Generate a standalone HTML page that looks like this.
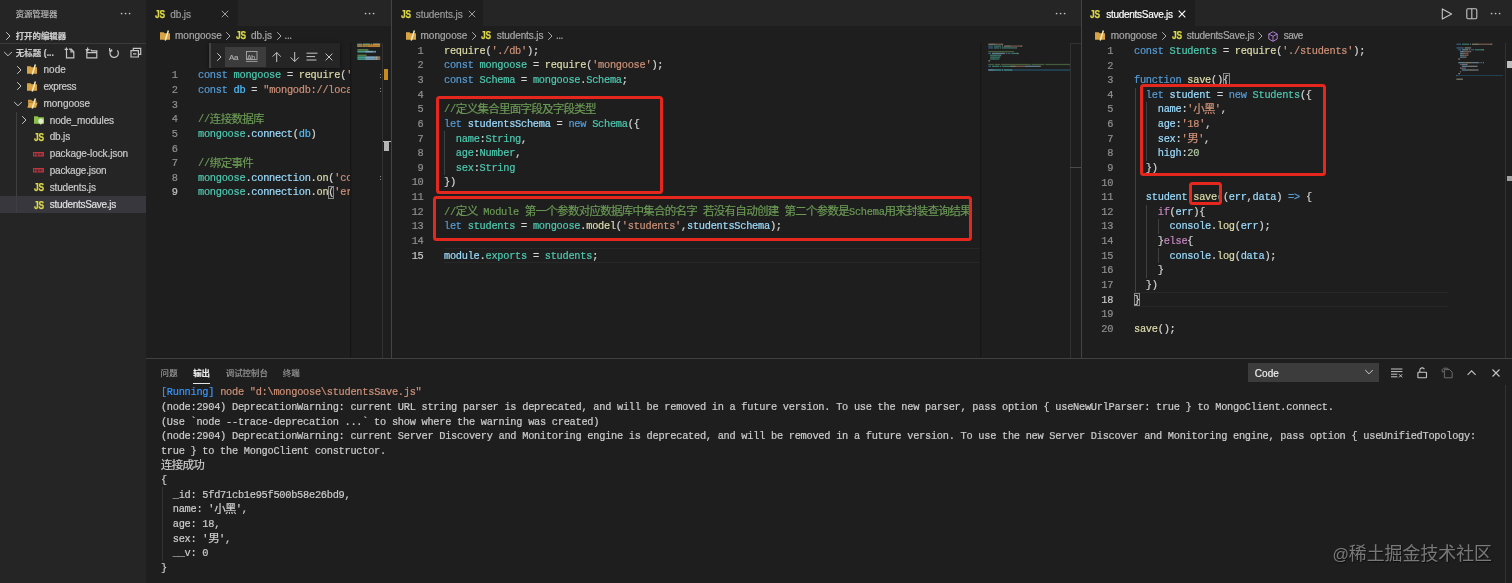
<!DOCTYPE html>
<html lang="zh-CN">
<head>
<meta charset="utf-8">
<title>mongoose - Visual Studio Code</title>
<style>
*{box-sizing:border-box;margin:0;padding:0}
html,body{width:1512px;height:583px;overflow:hidden;background:#1e1e1e}
body{position:relative;font-family:"Liberation Sans","Noto Sans CJK SC",sans-serif;font-size:10px;color:#ccc}
.abs,.ln,.cl,.ol,.t{position:absolute;white-space:pre}
#app{position:absolute;left:0;top:0;width:1512px;height:583px;will-change:transform}
#side{position:absolute;left:0;top:0;width:146px;height:583px;background:#252526}
.t{line-height:17px;height:17px;-webkit-text-stroke:0.18px currentColor}
.cjb{font-family:"Liberation Sans","Noto Sans CJK SC",sans-serif;font-weight:700;font-size:8.43px}
.cjn{font-family:"Liberation Sans","Noto Sans CJK SC",sans-serif;font-weight:400;font-size:8.43px}
.js{color:#dcd84a;-webkit-text-stroke:0.25px #dcd84a;font-weight:700;letter-spacing:-0.3px;transform:scaleX(0.83);transform-origin:0 50%}
.ln,.cl,.ol{font-family:"Liberation Mono","Noto Sans CJK SC",monospace;font-size:10.3px;letter-spacing:-0.256px;line-height:14.63px;height:14.63px}
.ln{color:#8f8f8f;text-align:right}
.cl,.ol,.ln{-webkit-text-stroke:0.2px currentColor}
.cl span{-webkit-text-stroke:0.2px currentColor}
.ln.act{color:#c6c6c6}
.cl{color:#d4d4d4}
.cj{font-family:"Liberation Mono","Noto Sans CJK SC",monospace;font-size:11.5px;letter-spacing:-0.73px;line-height:0;position:relative;top:0.5px}
.k{color:#569cd6}.y{color:#4ec9b0}.v{color:#9cdcfe}.f{color:#dcdcaa}.s{color:#ce9178}.m{color:#6a9955}.c{color:#4fc1ff}.n{color:#b5cea8}.p{color:#c586c0}
.ol{left:160.9px;color:#cccccc}
.ob{color:#3794ff}.oo{color:#ce9178}
.redbox{position:absolute;border:3.1px solid #e6271d;border-radius:3.5px}
svg{position:absolute;overflow:visible}
.cjb,.cjn{margin-top:0.7px}

#f0{letter-spacing:-0.125px}
#f1{letter-spacing:-0.008px}
#f2{letter-spacing:0.108px}
#f3{letter-spacing:0.088px}
#f4{letter-spacing:-0.331px}
#f5{letter-spacing:0.012px}
#f6{letter-spacing:-0.109px}
#f7{letter-spacing:-0.165px}
#f8{letter-spacing:-0.097px}
#f9{letter-spacing:-0.178px}
#f10{letter-spacing:-0.156px}
#f11{letter-spacing:-0.287px}
#f12{letter-spacing:-0.085px}
#f13{letter-spacing:-0.000px}
#f14{letter-spacing:-0.025px}
#f15{letter-spacing:-0.348px}
#f16{letter-spacing:-0.092px}
#f17{letter-spacing:0.012px}
#f18{letter-spacing:-0.119px}
#f19{letter-spacing:-0.415px}
#f20{letter-spacing:-0.267px}
#f21{letter-spacing:-0.025px}
#f22{letter-spacing:-0.214px}
#f23{letter-spacing:-0.556px}
#f24{letter-spacing:0.270px}
#f25{letter-spacing:-0.030px}
#f26{letter-spacing:-0.025px}
#f27{letter-spacing:0.220px}
#f28{letter-spacing:0.048px}
</style>
</head>
<body>
<div id="app">
<div id="side"></div>
<div id="f0" class="t cjn" style="left:15.7px;top:4.9px;color:#bbbbbb;">资源管理器</div>
<svg style="left:120.0px;top:11.0px" width="12" height="5" viewBox="0 0 12 5"><circle cx="1.6" cy="2.5" r="0.85" fill="#c5c5c5"/><circle cx="5.6" cy="2.5" r="0.85" fill="#c5c5c5"/><circle cx="9.6" cy="2.5" r="0.85" fill="#c5c5c5"/></svg>
<svg style="left:4.3px;top:29.8px" width="8" height="12" viewBox="0 0 8 12"><path d="M2.2 2.2 L6 6 L2.2 9.8" fill="none" stroke="#c5c5c5" stroke-width="1"/></svg>
<div id="f1" class="t cjb" style="left:15.7px;top:27.1px;color:#cccccc;">打开的编辑器</div>
<div class="abs" style="left:0.0px;top:43.0px;width:146.0px;height:1.0px;background:#3a3a3b;"></div>
<svg style="left:1.8px;top:49.6px" width="12" height="8" viewBox="0 0 12 8"><path d="M2.2 2 L6 5.8 L9.8 2" fill="none" stroke="#c5c5c5" stroke-width="1"/></svg>
<div id="f2" class="t cjb" style="left:15.7px;top:44.7px;color:#cccccc;">无标题 (...</div>
<svg style="left:64.0px;top:46.5px" width="12" height="12" viewBox="0 0 12 12"><path d="M2.5 3.5 v7.3 h7.3 v-6 l-2.6 -2.6 h-2.2 M7 2.3 v2.7 h2.7 M0.6 2.3 h3.6 M2.4 0.5 v3.6" fill="none" stroke="#c5c5c5" stroke-width="1.2"/></svg>
<svg style="left:85.0px;top:46.5px" width="13" height="12" viewBox="0 0 13 12"><path d="M3.2 3 h-1.4 v7.8 h10 v-7 h-5 l-1 -1.2 M1.8 5.6 h10 M0.6 2.6 h4 M2.6 0.6 v4" fill="none" stroke="#c5c5c5" stroke-width="1.2"/></svg>
<svg style="left:107.5px;top:46.5px" width="12" height="12" viewBox="0 0 12 12"><path d="M9.3 3.4 A4.2 4.2 0 1 1 4.1 2.6" fill="none" stroke="#c5c5c5" stroke-width="1.2"/><path d="M1.6 1.1 v2.7 h2.7" fill="none" stroke="#c5c5c5" stroke-width="1.2"/></svg>
<svg style="left:129.5px;top:47.0px" width="12" height="12" viewBox="0 0 12 12"><path d="M3.3 3.3 v-2 h7.4 v6 h-2 M1 3.6 h7.4 v6.4 h-7.4 z M3 6.8 h3.4" fill="none" stroke="#c5c5c5" stroke-width="1.2"/></svg>
<div class="abs" style="left:0.0px;top:195.9px;width:146.0px;height:16.9px;background:#37373d;"></div>
<div class="abs" style="left:16.4px;top:111.5px;width:0.8px;height:101.3px;background:#3f3f41;"></div>
<svg style="left:14.6px;top:63.5px" width="8" height="12" viewBox="0 0 8 12"><path d="M2.2 2.2 L6 6 L2.2 9.8" fill="none" stroke="#c5c5c5" stroke-width="1"/></svg>
<svg style="left:27.4px;top:64.9px" width="11" height="10" viewBox="0 0 11 10"><path d="M0 1.2 h3.6 l1 1 h5.4 v6.6 h-10 z" fill="#d9a243"/><path d="M5.2 9.6 L8.4 -0.4" stroke="#f7ebbd" stroke-width="1.5" fill="none"/></svg>
<div id="f3" class="t " style="left:43.4px;top:61.0px;color:#ccc;">node</div>
<svg style="left:14.6px;top:80.3px" width="8" height="12" viewBox="0 0 8 12"><path d="M2.2 2.2 L6 6 L2.2 9.8" fill="none" stroke="#c5c5c5" stroke-width="1"/></svg>
<svg style="left:27.4px;top:81.8px" width="11" height="10" viewBox="0 0 11 10"><path d="M0 1.2 h3.6 l1 1 h5.4 v6.6 h-10 z" fill="#d9a243"/><path d="M5.2 9.6 L8.4 -0.4" stroke="#f7ebbd" stroke-width="1.5" fill="none"/></svg>
<div id="f4" class="t " style="left:43.4px;top:77.8px;color:#ccc;">express</div>
<svg style="left:11.6px;top:99.6px" width="12" height="8" viewBox="0 0 12 8"><path d="M2.2 2 L6 5.8 L9.8 2" fill="none" stroke="#c5c5c5" stroke-width="1"/></svg>
<svg style="left:27.4px;top:98.6px" width="11" height="10" viewBox="0 0 11 10"><path d="M1 0.8 h3.2 l1 1 h4.3 v2 h-7.5 l-1 4 z" fill="#c8933c"/><path d="M2 3.8 h8.6 l-1.6 5 h-8.6 z" fill="#e0aa4a"/><path d="M5.2 9.6 L8.4 -0.4" stroke="#f7ebbd" stroke-width="1.5" fill="none"/></svg>
<div id="f5" class="t " style="left:43.4px;top:94.7px;color:#ccc;">mongoose</div>
<svg style="left:20.3px;top:114.1px" width="8" height="12" viewBox="0 0 8 12"><path d="M2.2 2.2 L6 6 L2.2 9.8" fill="none" stroke="#c5c5c5" stroke-width="1"/></svg>
<svg style="left:33.6px;top:115.1px" width="11" height="10" viewBox="0 0 11 10"><path d="M0 1.2 h3.6 l1 1 h5.4 v6.6 h-10 z" fill="#8bc34a"/><path d="M6.8 3 l2.8 1.6 v3.2 l-2.8 1.6 l-2.8 -1.6 v-3.2 z" fill="#dcedc8" stroke="#7cb342" stroke-width="0.5"/></svg>
<div id="f6" class="t " style="left:49.7px;top:111.6px;color:#ccc;">node_modules</div>
<div class="t js" style="left:33.8px;top:128.7px;font-size:10.1px">JS</div>
<div id="f7" class="t " style="left:49.7px;top:128.4px;color:#ccc;">db.js</div>
<svg style="left:33.0px;top:151.6px" width="11" height="5" viewBox="0 0 11 5"><rect x="0" y="0" width="11" height="4.4" fill="#c23640" rx="0.5"/><path d="M1.5 1.2v2.2 M3 1.2v2.2M4.6 1.2v2.9 M6 1.2v2.2 M7.6 1.2v2.2M9 1.2v2.2" stroke="#252526" stroke-width="0.85"/></svg>
<div id="f8" class="t " style="left:49.7px;top:145.2px;color:#ccc;">package-lock.json</div>
<svg style="left:33.0px;top:168.4px" width="11" height="5" viewBox="0 0 11 5"><rect x="0" y="0" width="11" height="4.4" fill="#c23640" rx="0.5"/><path d="M1.5 1.2v2.2 M3 1.2v2.2M4.6 1.2v2.9 M6 1.2v2.2 M7.6 1.2v2.2M9 1.2v2.2" stroke="#252526" stroke-width="0.85"/></svg>
<div id="f9" class="t " style="left:49.7px;top:162.1px;color:#ccc;">package.json</div>
<div class="t js" style="left:33.8px;top:179.3px;font-size:10.1px">JS</div>
<div id="f10" class="t " style="left:49.7px;top:179.0px;color:#ccc;">students.js</div>
<div class="t js" style="left:33.8px;top:196.7px;font-size:10.1px">JS</div>
<div id="f11" class="t " style="left:49.7px;top:195.8px;color:#e0e0e0;">studentsSave.js</div>
<div class="abs" style="left:146.0px;top:0.0px;width:245.0px;height:26.1px;background:#252526;"></div>
<div class="abs" style="left:146.0px;top:0.0px;width:92.0px;height:26.1px;background:#1e1e1e;"></div>
<div class="t js" style="left:155.0px;top:5.7px;font-size:10.1px">JS</div>
<div id="f12" class="t " style="left:170.2px;top:5.9px;color:#9d9d9d;">db.js</div>
<svg style="left:219.7px;top:8.8px" width="10" height="10" viewBox="0 0 10 10"><path d="M1.8 1.8 L8.2 8.2 M8.2 1.8 L1.8 8.2" fill="none" stroke="#9d9d9d" stroke-width="1"/></svg>
<svg style="left:364.0px;top:11.0px" width="12" height="5" viewBox="0 0 12 5"><circle cx="1.6" cy="2.5" r="0.85" fill="#c5c5c5"/><circle cx="5.6" cy="2.5" r="0.85" fill="#c5c5c5"/><circle cx="9.6" cy="2.5" r="0.85" fill="#c5c5c5"/></svg>
<svg style="left:160.0px;top:31.2px" width="11" height="10" viewBox="0 0 11 10"><path d="M0 1.2 h3.6 l1 1 h5.4 v6.6 h-10 z" fill="#d9a243"/><path d="M5.2 9.6 L8.4 -0.4" stroke="#f7ebbd" stroke-width="1.5" fill="none"/></svg>
<div id="f13" class="t " style="left:175.0px;top:27.2px;color:#a9a9a9;">mongoose</div>
<svg style="left:224.0px;top:30.0px" width="8" height="12" viewBox="0 0 8 12"><path d="M2.2 2.2 L6 6 L2.2 9.8" fill="none" stroke="#a9a9a9" stroke-width="1"/></svg>
<div class="t js" style="left:236.0px;top:27.1px;font-size:10.1px">JS</div>
<div id="f14" class="t " style="left:251.0px;top:27.2px;color:#a9a9a9;">db.js</div>
<svg style="left:274.7px;top:30.0px" width="8" height="12" viewBox="0 0 8 12"><path d="M2.2 2.2 L6 6 L2.2 9.8" fill="none" stroke="#a9a9a9" stroke-width="1"/></svg>
<div id="f15" class="t " style="left:284.5px;top:27.2px;color:#a9a9a9;">...</div>
<div class="ln" style="top:68.40px;left:137.6px;width:40px">1</div>
<div class="cl" style="top:68.40px;left:198.0px;width:152px;overflow:hidden;"><span class="k">const</span> <span class="y">mongoose</span> = <span class="f">require</span>(<span class="s">'mongoose');</span></div>
<div class="ln" style="top:83.03px;left:137.6px;width:40px">2</div>
<div class="cl" style="top:83.03px;left:198.0px;width:152px;overflow:hidden;"><span class="k">const</span> <span class="c">db</span> = <span class="s">"mongodb://localhost/students";</span></div>
<div class="ln" style="top:97.66px;left:137.6px;width:40px">3</div>
<div class="ln" style="top:112.29px;left:137.6px;width:40px">4</div>
<div class="cl" style="top:112.29px;left:198.0px;width:152px;overflow:hidden;"><span class="m">//<span class="cj">连接数据库</span></span></div>
<div class="ln" style="top:126.92px;left:137.6px;width:40px">5</div>
<div class="cl" style="top:126.92px;left:198.0px;width:152px;overflow:hidden;"><span class="y">mongoose</span>.<span class="v">connect</span>(<span class="c">db</span>)</div>
<div class="ln" style="top:141.55px;left:137.6px;width:40px">6</div>
<div class="ln" style="top:156.18px;left:137.6px;width:40px">7</div>
<div class="cl" style="top:156.18px;left:198.0px;width:152px;overflow:hidden;"><span class="m">//<span class="cj">绑定事件</span></span></div>
<div class="ln" style="top:170.81px;left:137.6px;width:40px">8</div>
<div class="cl" style="top:170.81px;left:198.0px;width:152px;overflow:hidden;"><span class="y">mongoose</span>.<span class="v">connection</span>.<span class="f">on</span>(<span class="s">'connected',</span></div>
<div class="ln act" style="top:185.44px;left:137.6px;width:40px">9</div>
<div class="cl" style="top:185.44px;left:198.0px;width:152px;overflow:hidden;"><span class="y">mongoose</span>.<span class="v">connection</span>.<span class="f">on</span>(<span class="s">'error',</span></div>
<div class="abs" style="left:327.8px;top:185.9px;width:6.4px;height:13.6px;background:transparent;border:1px solid #888"></div>
<div class="abs" style="left:380.3px;top:73.5px;width:1.0px;height:1.2px;background:#8a8a8a;"></div>
<div class="abs" style="left:380.3px;top:76.5px;width:1.0px;height:1.2px;background:#8a8a8a;"></div>
<div class="abs" style="left:380.3px;top:88.0px;width:1.0px;height:1.2px;background:#8a8a8a;"></div>
<div class="abs" style="left:380.3px;top:91.0px;width:1.0px;height:1.2px;background:#8a8a8a;"></div>
<div class="abs" style="left:380.3px;top:175.5px;width:1.0px;height:1.2px;background:#8a8a8a;"></div>
<div class="abs" style="left:380.3px;top:178.5px;width:1.0px;height:1.2px;background:#8a8a8a;"></div>
<div class="abs" style="left:209.0px;top:43.0px;width:131.0px;height:25.0px;background:#252526;box-shadow:0 1px 4px rgba(0,0,0,0.5)"></div>
<div class="abs" style="left:209.0px;top:43.0px;width:2.3px;height:25.0px;background:#454545;"></div>
<div class="abs" style="left:224.5px;top:47.2px;width:41.5px;height:20.0px;background:#3c3c3c;"></div>
<svg style="left:214.6px;top:50.6px" width="8" height="12" viewBox="0 0 8 12"><path d="M2.2 2.2 L6 6 L2.2 9.8" fill="none" stroke="#c5c5c5" stroke-width="1"/></svg>
<div class="t" style="left:229px;top:48.5px;font-size:8px;color:#b0b0b0;letter-spacing:-0.4px">Aa</div>
<svg style="left:245.5px;top:51.0px" width="12" height="11" viewBox="0 0 12 11"><rect x="0.5" y="0.5" width="10.5" height="8" fill="none" stroke="#a8a8a8" stroke-width="0.9"/><path d="M0 10.4 h11.5" stroke="#a8a8a8" stroke-width="0.9"/></svg>
<div class="t" style="left:247px;top:48.8px;font-size:7px;color:#a8a8a8;letter-spacing:-0.3px">Ab</div>
<svg style="left:271.0px;top:51.0px" width="12" height="12" viewBox="0 0 12 12"><path d="M5.7 11 V1.6 M1.6 5.6 L5.7 1.5 L9.8 5.6" fill="none" stroke="#c5c5c5" stroke-width="1"/></svg>
<svg style="left:289.0px;top:51.0px" width="12" height="12" viewBox="0 0 12 12"><path d="M5.7 1 V10.4 M1.6 6.4 L5.7 10.5 L9.8 6.4" fill="none" stroke="#c5c5c5" stroke-width="1"/></svg>
<svg style="left:305.5px;top:51.0px" width="12" height="12" viewBox="0 0 12 12"><path d="M0.5 2.2 h11 M0.5 5.6 h8.6 M0.5 9 h10" fill="none" stroke="#c5c5c5" stroke-width="1"/></svg>
<svg style="left:323.9px;top:51.7px" width="10" height="10" viewBox="0 0 10 10"><path d="M1.6 1.6 L8.4 8.4 M8.4 1.6 L1.6 8.4" fill="none" stroke="#c5c5c5" stroke-width="1"/></svg>
<div class="abs" style="left:350.0px;top:43.0px;width:2.0px;height:315.0px;background:linear-gradient(90deg,rgba(0,0,0,0.35),rgba(0,0,0,0));"></div>
<svg style="left:0;top:0" width="1512" height="583"><rect x="357.40" y="43.50" width="4.60" height="1.70" fill="#569cd6" fill-opacity="0.75"/><rect x="362.92" y="43.50" width="7.36" height="1.70" fill="#4ec9b0" fill-opacity="0.75"/><rect x="371.20" y="43.50" width="0.92" height="1.70" fill="#d4d4d4" fill-opacity="0.75"/><rect x="373.04" y="43.50" width="6.44" height="1.70" fill="#dcdcaa" fill-opacity="0.75"/><rect x="379.48" y="43.50" width="0.72" height="1.70" fill="#d4d4d4" fill-opacity="0.75"/><rect x="357.40" y="45.34" width="4.60" height="1.70" fill="#569cd6" fill-opacity="0.75"/><rect x="362.92" y="45.34" width="1.84" height="1.70" fill="#4fc1ff" fill-opacity="0.75"/><rect x="365.68" y="45.34" width="0.92" height="1.70" fill="#d4d4d4" fill-opacity="0.75"/><rect x="367.52" y="45.34" width="12.68" height="1.70" fill="#ce9178" fill-opacity="0.75"/><rect x="357.40" y="49.02" width="11.04" height="1.70" fill="#6a9955" fill-opacity="0.75"/><rect x="357.40" y="50.86" width="7.36" height="1.70" fill="#4ec9b0" fill-opacity="0.75"/><rect x="364.76" y="50.86" width="0.92" height="1.70" fill="#d4d4d4" fill-opacity="0.75"/><rect x="365.68" y="50.86" width="6.44" height="1.70" fill="#9cdcfe" fill-opacity="0.75"/><rect x="372.12" y="50.86" width="0.92" height="1.70" fill="#d4d4d4" fill-opacity="0.75"/><rect x="373.04" y="50.86" width="1.84" height="1.70" fill="#4fc1ff" fill-opacity="0.75"/><rect x="374.88" y="50.86" width="0.92" height="1.70" fill="#d4d4d4" fill-opacity="0.75"/><rect x="357.40" y="54.54" width="9.20" height="1.70" fill="#6a9955" fill-opacity="0.75"/><rect x="357.40" y="56.38" width="7.36" height="1.70" fill="#4ec9b0" fill-opacity="0.75"/><rect x="364.76" y="56.38" width="0.92" height="1.70" fill="#d4d4d4" fill-opacity="0.75"/><rect x="365.68" y="56.38" width="9.20" height="1.70" fill="#9cdcfe" fill-opacity="0.75"/><rect x="374.88" y="56.38" width="0.92" height="1.70" fill="#d4d4d4" fill-opacity="0.75"/><rect x="375.80" y="56.38" width="1.84" height="1.70" fill="#dcdcaa" fill-opacity="0.75"/><rect x="377.64" y="56.38" width="0.92" height="1.70" fill="#d4d4d4" fill-opacity="0.75"/><rect x="378.56" y="56.38" width="1.64" height="1.70" fill="#ce9178" fill-opacity="0.75"/><rect x="357.40" y="58.22" width="7.36" height="1.70" fill="#4ec9b0" fill-opacity="0.75"/><rect x="364.76" y="58.22" width="0.92" height="1.70" fill="#d4d4d4" fill-opacity="0.75"/><rect x="365.68" y="58.22" width="9.20" height="1.70" fill="#9cdcfe" fill-opacity="0.75"/><rect x="374.88" y="58.22" width="0.92" height="1.70" fill="#d4d4d4" fill-opacity="0.75"/><rect x="375.80" y="58.22" width="1.84" height="1.70" fill="#dcdcaa" fill-opacity="0.75"/><rect x="377.64" y="58.22" width="0.92" height="1.70" fill="#d4d4d4" fill-opacity="0.75"/><rect x="378.56" y="58.22" width="1.64" height="1.70" fill="#ce9178" fill-opacity="0.75"/></svg>
<div class="abs" style="left:357.4px;top:43.8px;width:22.6px;height:3.0px;background:rgba(209,134,22,0.55);"></div>
<div class="abs" style="left:382.0px;top:43.0px;width:0.8px;height:315.0px;background:#323232;"></div>
<div class="abs" style="left:383.8px;top:69.4px;width:4.2px;height:10.8px;background:#c58a22;"></div>
<div class="abs" style="left:383.0px;top:140.6px;width:7.5px;height:1.6px;background:#bdbdbd;"></div>
<div class="abs" style="left:384.0px;top:142.0px;width:4.6px;height:9.4px;background:#b4b4b4;"></div>
<div class="abs" style="left:391.0px;top:0.0px;width:1.0px;height:358.0px;background:#444444;"></div>
<div class="abs" style="left:392.0px;top:0.0px;width:690.0px;height:26.1px;background:#252526;"></div>
<div class="abs" style="left:392.0px;top:0.0px;width:90.5px;height:26.1px;background:#1e1e1e;"></div>
<div class="t js" style="left:401.0px;top:5.7px;font-size:10.1px">JS</div>
<div id="f16" class="t " style="left:415.8px;top:5.9px;color:#9d9d9d;">students.js</div>
<svg style="left:466.8px;top:8.8px" width="10" height="10" viewBox="0 0 10 10"><path d="M1.8 1.8 L8.2 8.2 M8.2 1.8 L1.8 8.2" fill="none" stroke="#9d9d9d" stroke-width="1"/></svg>
<svg style="left:1055.0px;top:11.0px" width="12" height="5" viewBox="0 0 12 5"><circle cx="1.6" cy="2.5" r="0.85" fill="#c5c5c5"/><circle cx="5.6" cy="2.5" r="0.85" fill="#c5c5c5"/><circle cx="9.6" cy="2.5" r="0.85" fill="#c5c5c5"/></svg>
<svg style="left:405.7px;top:31.2px" width="11" height="10" viewBox="0 0 11 10"><path d="M0 1.2 h3.6 l1 1 h5.4 v6.6 h-10 z" fill="#d9a243"/><path d="M5.2 9.6 L8.4 -0.4" stroke="#f7ebbd" stroke-width="1.5" fill="none"/></svg>
<div id="f17" class="t " style="left:420.5px;top:27.2px;color:#a9a9a9;">mongoose</div>
<svg style="left:470.2px;top:30.0px" width="8" height="12" viewBox="0 0 8 12"><path d="M2.2 2.2 L6 6 L2.2 9.8" fill="none" stroke="#a9a9a9" stroke-width="1"/></svg>
<div class="t js" style="left:481.0px;top:27.1px;font-size:10.1px">JS</div>
<div id="f18" class="t " style="left:496.8px;top:27.2px;color:#a9a9a9;">students.js</div>
<svg style="left:546.2px;top:30.0px" width="8" height="12" viewBox="0 0 8 12"><path d="M2.2 2.2 L6 6 L2.2 9.8" fill="none" stroke="#a9a9a9" stroke-width="1"/></svg>
<div id="f19" class="t " style="left:555.9px;top:27.2px;color:#a9a9a9;">...</div>
<div class="abs" style="left:444.0px;top:248.4px;width:536.0px;height:14.6px;background:transparent;border-top:1px solid #272727;border-bottom:1px solid #272727"></div>
<div class="abs" style="left:444.3px;top:131.4px;width:0.8px;height:43.9px;background:#404040;"></div>
<div class="ln" style="top:43.80px;left:383.5px;width:40px">1</div>
<div class="cl" style="top:43.80px;left:444.0px;"><span class="f">require</span>(<span class="s">'./db'</span>);</div>
<div class="ln" style="top:58.43px;left:383.5px;width:40px">2</div>
<div class="cl" style="top:58.43px;left:444.0px;"><span class="k">const</span> <span class="y">mongoose</span> = <span class="f">require</span>(<span class="s">'mongoose'</span>);</div>
<div class="ln" style="top:73.06px;left:383.5px;width:40px">3</div>
<div class="cl" style="top:73.06px;left:444.0px;"><span class="k">const</span> <span class="y">Schema</span> = <span class="y">mongoose</span>.<span class="y">Schema</span>;</div>
<div class="ln" style="top:87.69px;left:383.5px;width:40px">4</div>
<div class="ln" style="top:102.32px;left:383.5px;width:40px">5</div>
<div class="cl" style="top:102.32px;left:444.0px;"><span class="m">//<span class="cj">定义集合里面字段及字段类型</span></span></div>
<div class="ln" style="top:116.95px;left:383.5px;width:40px">6</div>
<div class="cl" style="top:116.95px;left:444.0px;"><span class="k">let</span> <span class="v">studentsSchema</span> = <span class="k">new</span> <span class="y">Schema</span>({</div>
<div class="ln" style="top:131.58px;left:383.5px;width:40px">7</div>
<div class="cl" style="top:131.58px;left:444.0px;">  <span class="y">name</span>:<span class="y">String</span>,</div>
<div class="ln" style="top:146.21px;left:383.5px;width:40px">8</div>
<div class="cl" style="top:146.21px;left:444.0px;">  <span class="y">age</span>:<span class="y">Number</span>,</div>
<div class="ln" style="top:160.84px;left:383.5px;width:40px">9</div>
<div class="cl" style="top:160.84px;left:444.0px;">  <span class="y">sex</span>:<span class="y">String</span></div>
<div class="ln" style="top:175.47px;left:383.5px;width:40px">10</div>
<div class="cl" style="top:175.47px;left:444.0px;">})</div>
<div class="ln" style="top:190.10px;left:383.5px;width:40px">11</div>
<div class="ln" style="top:204.73px;left:383.5px;width:40px">12</div>
<div class="cl" style="top:204.73px;left:444.0px;"><span class="m">//<span class="cj">定义</span> Module <span class="cj">第一个参数对应数据库中集合的名字</span> <span class="cj">若没有自动创建</span> <span class="cj">第二个参数是</span>Schema<span class="cj">用来封装查询结果</span></span></div>
<div class="ln" style="top:219.36px;left:383.5px;width:40px">13</div>
<div class="cl" style="top:219.36px;left:444.0px;"><span class="k">let</span> <span class="y">students</span> = <span class="y">mongoose</span>.<span class="f">model</span>(<span class="s">'students'</span>,<span class="v">studentsSchema</span>);</div>
<div class="ln" style="top:233.99px;left:383.5px;width:40px">14</div>
<div class="ln act" style="top:248.62px;left:383.5px;width:40px">15</div>
<div class="cl" style="top:248.62px;left:444.0px;"><span class="v">module</span>.<span class="y">exports</span> = <span class="y">students</span>;</div>
<div class="abs" style="left:980.0px;top:43.0px;width:2.0px;height:315.0px;background:linear-gradient(90deg,rgba(0,0,0,0.3),rgba(0,0,0,0));"></div>
<div class="abs" style="left:988.0px;top:69.3px;width:82.0px;height:1.3px;background:rgba(38,95,130,0.5);"></div>
<svg style="left:0;top:0" width="1512" height="583"><rect x="988.30" y="43.60" width="6.44" height="1.30" fill="#dcdcaa" fill-opacity="0.50"/><rect x="994.74" y="43.60" width="0.92" height="1.30" fill="#d4d4d4" fill-opacity="0.50"/><rect x="995.66" y="43.60" width="5.52" height="1.30" fill="#ce9178" fill-opacity="0.50"/><rect x="1001.18" y="43.60" width="1.84" height="1.30" fill="#d4d4d4" fill-opacity="0.50"/><rect x="988.30" y="45.44" width="4.60" height="1.30" fill="#569cd6" fill-opacity="0.50"/><rect x="993.82" y="45.44" width="7.36" height="1.30" fill="#4ec9b0" fill-opacity="0.50"/><rect x="1002.10" y="45.44" width="0.92" height="1.30" fill="#d4d4d4" fill-opacity="0.50"/><rect x="1003.94" y="45.44" width="6.44" height="1.30" fill="#dcdcaa" fill-opacity="0.50"/><rect x="1010.38" y="45.44" width="0.92" height="1.30" fill="#d4d4d4" fill-opacity="0.50"/><rect x="1011.30" y="45.44" width="9.20" height="1.30" fill="#ce9178" fill-opacity="0.50"/><rect x="1020.50" y="45.44" width="1.84" height="1.30" fill="#d4d4d4" fill-opacity="0.50"/><rect x="988.30" y="47.28" width="4.60" height="1.30" fill="#569cd6" fill-opacity="0.50"/><rect x="993.82" y="47.28" width="5.52" height="1.30" fill="#4ec9b0" fill-opacity="0.50"/><rect x="1000.26" y="47.28" width="0.92" height="1.30" fill="#d4d4d4" fill-opacity="0.50"/><rect x="1002.10" y="47.28" width="7.36" height="1.30" fill="#4ec9b0" fill-opacity="0.50"/><rect x="1009.46" y="47.28" width="0.92" height="1.30" fill="#d4d4d4" fill-opacity="0.50"/><rect x="1010.38" y="47.28" width="5.52" height="1.30" fill="#4ec9b0" fill-opacity="0.50"/><rect x="1015.90" y="47.28" width="0.92" height="1.30" fill="#d4d4d4" fill-opacity="0.50"/><rect x="988.30" y="50.96" width="25.76" height="1.30" fill="#6a9955" fill-opacity="0.50"/><rect x="988.30" y="52.80" width="2.76" height="1.30" fill="#569cd6" fill-opacity="0.50"/><rect x="991.98" y="52.80" width="12.88" height="1.30" fill="#9cdcfe" fill-opacity="0.50"/><rect x="1005.78" y="52.80" width="0.92" height="1.30" fill="#d4d4d4" fill-opacity="0.50"/><rect x="1007.62" y="52.80" width="2.76" height="1.30" fill="#569cd6" fill-opacity="0.50"/><rect x="1011.30" y="52.80" width="5.52" height="1.30" fill="#4ec9b0" fill-opacity="0.50"/><rect x="1016.82" y="52.80" width="1.84" height="1.30" fill="#d4d4d4" fill-opacity="0.50"/><rect x="990.14" y="54.64" width="3.68" height="1.30" fill="#4ec9b0" fill-opacity="0.50"/><rect x="993.82" y="54.64" width="0.92" height="1.30" fill="#d4d4d4" fill-opacity="0.50"/><rect x="994.74" y="54.64" width="5.52" height="1.30" fill="#4ec9b0" fill-opacity="0.50"/><rect x="1000.26" y="54.64" width="0.92" height="1.30" fill="#d4d4d4" fill-opacity="0.50"/><rect x="990.14" y="56.48" width="2.76" height="1.30" fill="#4ec9b0" fill-opacity="0.50"/><rect x="992.90" y="56.48" width="0.92" height="1.30" fill="#d4d4d4" fill-opacity="0.50"/><rect x="993.82" y="56.48" width="5.52" height="1.30" fill="#4ec9b0" fill-opacity="0.50"/><rect x="999.34" y="56.48" width="0.92" height="1.30" fill="#d4d4d4" fill-opacity="0.50"/><rect x="990.14" y="58.32" width="2.76" height="1.30" fill="#4ec9b0" fill-opacity="0.50"/><rect x="992.90" y="58.32" width="0.92" height="1.30" fill="#d4d4d4" fill-opacity="0.50"/><rect x="993.82" y="58.32" width="5.52" height="1.30" fill="#4ec9b0" fill-opacity="0.50"/><rect x="988.30" y="60.16" width="1.84" height="1.30" fill="#d4d4d4" fill-opacity="0.50"/><rect x="988.30" y="63.84" width="5.52" height="1.30" fill="#6a9955" fill-opacity="0.50"/><rect x="994.74" y="63.84" width="5.52" height="1.30" fill="#6a9955" fill-opacity="0.50"/><rect x="1001.18" y="63.84" width="29.44" height="1.30" fill="#6a9955" fill-opacity="0.50"/><rect x="1031.54" y="63.84" width="12.88" height="1.30" fill="#6a9955" fill-opacity="0.50"/><rect x="1045.34" y="63.84" width="24.66" height="1.30" fill="#6a9955" fill-opacity="0.50"/><rect x="988.30" y="65.68" width="2.76" height="1.30" fill="#569cd6" fill-opacity="0.50"/><rect x="991.98" y="65.68" width="7.36" height="1.30" fill="#4ec9b0" fill-opacity="0.50"/><rect x="1000.26" y="65.68" width="0.92" height="1.30" fill="#d4d4d4" fill-opacity="0.50"/><rect x="1002.10" y="65.68" width="7.36" height="1.30" fill="#4ec9b0" fill-opacity="0.50"/><rect x="1009.46" y="65.68" width="0.92" height="1.30" fill="#d4d4d4" fill-opacity="0.50"/><rect x="1010.38" y="65.68" width="4.60" height="1.30" fill="#dcdcaa" fill-opacity="0.50"/><rect x="1014.98" y="65.68" width="0.92" height="1.30" fill="#d4d4d4" fill-opacity="0.50"/><rect x="1015.90" y="65.68" width="9.20" height="1.30" fill="#ce9178" fill-opacity="0.50"/><rect x="1025.10" y="65.68" width="0.92" height="1.30" fill="#d4d4d4" fill-opacity="0.50"/><rect x="1026.02" y="65.68" width="12.88" height="1.30" fill="#9cdcfe" fill-opacity="0.50"/><rect x="1038.90" y="65.68" width="1.84" height="1.30" fill="#d4d4d4" fill-opacity="0.50"/><rect x="988.30" y="69.36" width="5.52" height="1.30" fill="#9cdcfe" fill-opacity="0.50"/><rect x="993.82" y="69.36" width="0.92" height="1.30" fill="#d4d4d4" fill-opacity="0.50"/><rect x="994.74" y="69.36" width="6.44" height="1.30" fill="#4ec9b0" fill-opacity="0.50"/><rect x="1002.10" y="69.36" width="0.92" height="1.30" fill="#d4d4d4" fill-opacity="0.50"/><rect x="1003.94" y="69.36" width="7.36" height="1.30" fill="#4ec9b0" fill-opacity="0.50"/><rect x="1011.30" y="69.36" width="0.92" height="1.30" fill="#d4d4d4" fill-opacity="0.50"/></svg>
<div class="abs" style="left:1070.0px;top:43.0px;width:0.8px;height:315.0px;background:#323232;"></div>
<div class="abs" style="left:1070.0px;top:43.2px;width:11.0px;height:0.8px;background:#323232;"></div>
<div class="abs" style="left:1070.0px;top:166.6px;width:12.0px;height:1.0px;background:#4a4a4a;"></div>
<div class="redbox" style="left:436.0px;top:96.3px;width:227.0px;height:97.7px"></div>
<div class="redbox" style="left:432.5px;top:195.6px;width:539.3px;height:45.4px"></div>
<div class="abs" style="left:1081.2px;top:0.0px;width:1.0px;height:358.0px;background:#444444;"></div>
<div class="abs" style="left:1083.0px;top:0.0px;width:429.0px;height:26.1px;background:#252526;"></div>
<div class="abs" style="left:1083.0px;top:0.0px;width:111.5px;height:26.1px;background:#1e1e1e;"></div>
<div class="t js" style="left:1090.0px;top:5.7px;font-size:10.1px">JS</div>
<div id="f20" class="t " style="left:1106.2px;top:5.9px;color:#ffffff;">studentsSave.js</div>
<svg style="left:1177.2px;top:8.8px" width="10" height="10" viewBox="0 0 10 10"><path d="M1.7 1.7 L8.3 8.3 M8.3 1.7 L1.7 8.3" fill="none" stroke="#ffffff" stroke-width="1.1"/></svg>
<svg style="left:1441.0px;top:7.5px" width="12" height="12" viewBox="0 0 12 12"><path d="M1.3 0.9 L10.6 5.9 L1.3 10.9 Z" fill="none" stroke="#c5c5c5" stroke-width="1.1" stroke-linejoin="round"/></svg>
<svg style="left:1465.5px;top:7.5px" width="12" height="12" viewBox="0 0 12 12"><rect x="0.8" y="0.8" width="10" height="10" rx="1.2" fill="none" stroke="#c5c5c5" stroke-width="1.1"/><path d="M5.8 0.8 v10" stroke="#c5c5c5" stroke-width="1.1"/></svg>
<svg style="left:1490.0px;top:11.0px" width="12" height="5" viewBox="0 0 12 5"><circle cx="1.6" cy="2.5" r="0.85" fill="#c5c5c5"/><circle cx="5.6" cy="2.5" r="0.85" fill="#c5c5c5"/><circle cx="9.6" cy="2.5" r="0.85" fill="#c5c5c5"/></svg>
<svg style="left:1094.7px;top:31.2px" width="11" height="10" viewBox="0 0 11 10"><path d="M0 1.2 h3.6 l1 1 h5.4 v6.6 h-10 z" fill="#d9a243"/><path d="M5.2 9.6 L8.4 -0.4" stroke="#f7ebbd" stroke-width="1.5" fill="none"/></svg>
<div id="f21" class="t " style="left:1110.8px;top:27.2px;color:#a9a9a9;">mongoose</div>
<svg style="left:1160.2px;top:30.0px" width="8" height="12" viewBox="0 0 8 12"><path d="M2.2 2.2 L6 6 L2.2 9.8" fill="none" stroke="#a9a9a9" stroke-width="1"/></svg>
<div class="t js" style="left:1171.8px;top:27.1px;font-size:10.1px">JS</div>
<div id="f22" class="t " style="left:1186.8px;top:27.2px;color:#a9a9a9;">studentsSave.js</div>
<svg style="left:1256.3px;top:30.0px" width="8" height="12" viewBox="0 0 8 12"><path d="M2.2 2.2 L6 6 L2.2 9.8" fill="none" stroke="#a9a9a9" stroke-width="1"/></svg>
<svg style="left:1267.5px;top:30.6px" width="10" height="11" viewBox="0 0 10 11"><path d="M5 0.7 L9.2 3 V8 L5 10.3 L0.8 8 V3 Z M0.8 3 L5 5.3 L9.2 3 M5 5.3 V10.3" fill="none" stroke="#b180d7" stroke-width="0.95" stroke-linejoin="round"/></svg>
<div id="f23" class="t " style="left:1283.8px;top:27.2px;color:#a9a9a9;">save</div>
<div class="abs" style="left:1134.6px;top:87.5px;width:0.8px;height:204.8px;background:#404040;"></div>
<div class="abs" style="left:1146.4px;top:102.1px;width:0.8px;height:58.5px;background:#404040;"></div>
<div class="abs" style="left:1146.4px;top:204.5px;width:0.8px;height:73.2px;background:#404040;"></div>
<div class="abs" style="left:1158.2px;top:219.2px;width:0.8px;height:14.6px;background:#404040;"></div>
<div class="abs" style="left:1158.2px;top:248.4px;width:0.8px;height:14.6px;background:#404040;"></div>
<div class="abs" style="left:1134.0px;top:292.3px;width:314.0px;height:14.6px;background:transparent;border-top:1px solid #272727;border-bottom:1px solid #272727"></div>
<div class="abs" style="left:1223.3px;top:73.4px;width:6.4px;height:13.6px;background:transparent;border:1px solid #888"></div>
<div class="abs" style="left:1133.5px;top:292.8px;width:6.4px;height:13.6px;background:transparent;border:1px solid #888"></div>
<div class="ln" style="top:43.90px;left:1073.2px;width:40px">1</div>
<div class="cl" style="top:43.90px;left:1134.0px;"><span class="k">const</span> <span class="y">Students</span> = <span class="f">require</span>(<span class="s">'./students'</span>);</div>
<div class="ln" style="top:58.53px;left:1073.2px;width:40px">2</div>
<div class="ln" style="top:73.16px;left:1073.2px;width:40px">3</div>
<div class="cl" style="top:73.16px;left:1134.0px;"><span class="k">function</span> <span class="f">save</span>(){</div>
<div class="ln" style="top:87.79px;left:1073.2px;width:40px">4</div>
<div class="cl" style="top:87.79px;left:1134.0px;">  <span class="k">let</span> <span class="v">student</span> = <span class="k">new</span> <span class="y">Students</span>({</div>
<div class="ln" style="top:102.42px;left:1073.2px;width:40px">5</div>
<div class="cl" style="top:102.42px;left:1134.0px;">    <span class="v">name</span>:<span class="s">'<span class="cj">小黑</span>'</span>,</div>
<div class="ln" style="top:117.05px;left:1073.2px;width:40px">6</div>
<div class="cl" style="top:117.05px;left:1134.0px;">    <span class="v">age</span>:<span class="s">'18'</span>,</div>
<div class="ln" style="top:131.68px;left:1073.2px;width:40px">7</div>
<div class="cl" style="top:131.68px;left:1134.0px;">    <span class="v">sex</span>:<span class="s">'<span class="cj">男</span>'</span>,</div>
<div class="ln" style="top:146.31px;left:1073.2px;width:40px">8</div>
<div class="cl" style="top:146.31px;left:1134.0px;">    <span class="v">high</span>:<span class="n">20</span></div>
<div class="ln" style="top:160.94px;left:1073.2px;width:40px">9</div>
<div class="cl" style="top:160.94px;left:1134.0px;">  })</div>
<div class="ln" style="top:175.57px;left:1073.2px;width:40px">10</div>
<div class="ln" style="top:190.20px;left:1073.2px;width:40px">11</div>
<div class="cl" style="top:190.20px;left:1134.0px;">  <span class="v">student</span>.<span class="f">save</span>((<span class="v">err</span>,<span class="v">data</span>) <span class="k">=&gt;</span> {</div>
<div class="ln" style="top:204.83px;left:1073.2px;width:40px">12</div>
<div class="cl" style="top:204.83px;left:1134.0px;">    <span class="p">if</span>(<span class="v">err</span>){</div>
<div class="ln" style="top:219.46px;left:1073.2px;width:40px">13</div>
<div class="cl" style="top:219.46px;left:1134.0px;">      <span class="v">console</span>.<span class="f">log</span>(<span class="v">err</span>);</div>
<div class="ln" style="top:234.09px;left:1073.2px;width:40px">14</div>
<div class="cl" style="top:234.09px;left:1134.0px;">    }<span class="p">else</span>{</div>
<div class="ln" style="top:248.72px;left:1073.2px;width:40px">15</div>
<div class="cl" style="top:248.72px;left:1134.0px;">      <span class="v">console</span>.<span class="f">log</span>(<span class="v">data</span>);</div>
<div class="ln" style="top:263.35px;left:1073.2px;width:40px">16</div>
<div class="cl" style="top:263.35px;left:1134.0px;">    }</div>
<div class="ln" style="top:277.98px;left:1073.2px;width:40px">17</div>
<div class="cl" style="top:277.98px;left:1134.0px;">  })</div>
<div class="ln act" style="top:292.61px;left:1073.2px;width:40px">18</div>
<div class="cl" style="top:292.61px;left:1134.0px;">}</div>
<div class="ln" style="top:307.24px;left:1073.2px;width:40px">19</div>
<div class="ln" style="top:321.87px;left:1073.2px;width:40px">20</div>
<div class="cl" style="top:321.87px;left:1134.0px;"><span class="f">save</span>();</div>
<svg style="left:0;top:0" width="1512" height="583"><rect x="1456.40" y="43.60" width="4.60" height="1.30" fill="#569cd6" fill-opacity="0.50"/><rect x="1461.92" y="43.60" width="7.36" height="1.30" fill="#4ec9b0" fill-opacity="0.50"/><rect x="1470.20" y="43.60" width="0.92" height="1.30" fill="#d4d4d4" fill-opacity="0.50"/><rect x="1472.04" y="43.60" width="6.44" height="1.30" fill="#dcdcaa" fill-opacity="0.50"/><rect x="1478.48" y="43.60" width="0.92" height="1.30" fill="#d4d4d4" fill-opacity="0.50"/><rect x="1479.40" y="43.60" width="11.04" height="1.30" fill="#ce9178" fill-opacity="0.50"/><rect x="1490.44" y="43.60" width="1.84" height="1.30" fill="#d4d4d4" fill-opacity="0.50"/><rect x="1456.40" y="47.28" width="7.36" height="1.30" fill="#569cd6" fill-opacity="0.50"/><rect x="1464.68" y="47.28" width="3.68" height="1.30" fill="#dcdcaa" fill-opacity="0.50"/><rect x="1468.36" y="47.28" width="2.76" height="1.30" fill="#d4d4d4" fill-opacity="0.50"/><rect x="1458.24" y="49.12" width="2.76" height="1.30" fill="#569cd6" fill-opacity="0.50"/><rect x="1461.92" y="49.12" width="6.44" height="1.30" fill="#9cdcfe" fill-opacity="0.50"/><rect x="1469.28" y="49.12" width="0.92" height="1.30" fill="#d4d4d4" fill-opacity="0.50"/><rect x="1471.12" y="49.12" width="2.76" height="1.30" fill="#569cd6" fill-opacity="0.50"/><rect x="1474.80" y="49.12" width="7.36" height="1.30" fill="#4ec9b0" fill-opacity="0.50"/><rect x="1482.16" y="49.12" width="1.84" height="1.30" fill="#d4d4d4" fill-opacity="0.50"/><rect x="1460.08" y="50.96" width="3.68" height="1.30" fill="#9cdcfe" fill-opacity="0.50"/><rect x="1463.76" y="50.96" width="0.92" height="1.30" fill="#d4d4d4" fill-opacity="0.50"/><rect x="1464.68" y="50.96" width="5.52" height="1.30" fill="#ce9178" fill-opacity="0.50"/><rect x="1470.20" y="50.96" width="0.92" height="1.30" fill="#d4d4d4" fill-opacity="0.50"/><rect x="1460.08" y="52.80" width="2.76" height="1.30" fill="#9cdcfe" fill-opacity="0.50"/><rect x="1462.84" y="52.80" width="0.92" height="1.30" fill="#d4d4d4" fill-opacity="0.50"/><rect x="1463.76" y="52.80" width="3.68" height="1.30" fill="#ce9178" fill-opacity="0.50"/><rect x="1467.44" y="52.80" width="0.92" height="1.30" fill="#d4d4d4" fill-opacity="0.50"/><rect x="1460.08" y="54.64" width="2.76" height="1.30" fill="#9cdcfe" fill-opacity="0.50"/><rect x="1462.84" y="54.64" width="0.92" height="1.30" fill="#d4d4d4" fill-opacity="0.50"/><rect x="1463.76" y="54.64" width="3.68" height="1.30" fill="#ce9178" fill-opacity="0.50"/><rect x="1467.44" y="54.64" width="0.92" height="1.30" fill="#d4d4d4" fill-opacity="0.50"/><rect x="1460.08" y="56.48" width="3.68" height="1.30" fill="#9cdcfe" fill-opacity="0.50"/><rect x="1463.76" y="56.48" width="0.92" height="1.30" fill="#d4d4d4" fill-opacity="0.50"/><rect x="1464.68" y="56.48" width="1.84" height="1.30" fill="#b5cea8" fill-opacity="0.50"/><rect x="1458.24" y="58.32" width="1.84" height="1.30" fill="#d4d4d4" fill-opacity="0.50"/><rect x="1458.24" y="62.00" width="6.44" height="1.30" fill="#9cdcfe" fill-opacity="0.50"/><rect x="1464.68" y="62.00" width="0.92" height="1.30" fill="#d4d4d4" fill-opacity="0.50"/><rect x="1465.60" y="62.00" width="3.68" height="1.30" fill="#dcdcaa" fill-opacity="0.50"/><rect x="1469.28" y="62.00" width="1.84" height="1.30" fill="#d4d4d4" fill-opacity="0.50"/><rect x="1471.12" y="62.00" width="2.76" height="1.30" fill="#9cdcfe" fill-opacity="0.50"/><rect x="1473.88" y="62.00" width="0.92" height="1.30" fill="#d4d4d4" fill-opacity="0.50"/><rect x="1474.80" y="62.00" width="3.68" height="1.30" fill="#9cdcfe" fill-opacity="0.50"/><rect x="1478.48" y="62.00" width="0.92" height="1.30" fill="#d4d4d4" fill-opacity="0.50"/><rect x="1480.32" y="62.00" width="1.84" height="1.30" fill="#569cd6" fill-opacity="0.50"/><rect x="1483.08" y="62.00" width="0.92" height="1.30" fill="#d4d4d4" fill-opacity="0.50"/><rect x="1460.08" y="63.84" width="1.84" height="1.30" fill="#c586c0" fill-opacity="0.50"/><rect x="1461.92" y="63.84" width="0.92" height="1.30" fill="#d4d4d4" fill-opacity="0.50"/><rect x="1462.84" y="63.84" width="2.76" height="1.30" fill="#9cdcfe" fill-opacity="0.50"/><rect x="1465.60" y="63.84" width="1.84" height="1.30" fill="#d4d4d4" fill-opacity="0.50"/><rect x="1461.92" y="65.68" width="6.44" height="1.30" fill="#9cdcfe" fill-opacity="0.50"/><rect x="1468.36" y="65.68" width="0.92" height="1.30" fill="#d4d4d4" fill-opacity="0.50"/><rect x="1469.28" y="65.68" width="2.76" height="1.30" fill="#dcdcaa" fill-opacity="0.50"/><rect x="1472.04" y="65.68" width="0.92" height="1.30" fill="#d4d4d4" fill-opacity="0.50"/><rect x="1472.96" y="65.68" width="2.76" height="1.30" fill="#9cdcfe" fill-opacity="0.50"/><rect x="1475.72" y="65.68" width="1.84" height="1.30" fill="#d4d4d4" fill-opacity="0.50"/><rect x="1460.08" y="67.52" width="0.92" height="1.30" fill="#d4d4d4" fill-opacity="0.50"/><rect x="1461.00" y="67.52" width="3.68" height="1.30" fill="#c586c0" fill-opacity="0.50"/><rect x="1464.68" y="67.52" width="0.92" height="1.30" fill="#d4d4d4" fill-opacity="0.50"/><rect x="1461.92" y="69.36" width="6.44" height="1.30" fill="#9cdcfe" fill-opacity="0.50"/><rect x="1468.36" y="69.36" width="0.92" height="1.30" fill="#d4d4d4" fill-opacity="0.50"/><rect x="1469.28" y="69.36" width="2.76" height="1.30" fill="#dcdcaa" fill-opacity="0.50"/><rect x="1472.04" y="69.36" width="0.92" height="1.30" fill="#d4d4d4" fill-opacity="0.50"/><rect x="1472.96" y="69.36" width="3.68" height="1.30" fill="#9cdcfe" fill-opacity="0.50"/><rect x="1476.64" y="69.36" width="1.84" height="1.30" fill="#d4d4d4" fill-opacity="0.50"/><rect x="1460.08" y="71.20" width="0.92" height="1.30" fill="#d4d4d4" fill-opacity="0.50"/><rect x="1458.24" y="73.04" width="1.84" height="1.30" fill="#d4d4d4" fill-opacity="0.50"/><rect x="1456.40" y="74.88" width="0.92" height="1.30" fill="#d4d4d4" fill-opacity="0.50"/><rect x="1456.40" y="78.56" width="3.68" height="1.30" fill="#dcdcaa" fill-opacity="0.50"/><rect x="1460.08" y="78.56" width="2.76" height="1.30" fill="#d4d4d4" fill-opacity="0.50"/></svg>
<div class="abs" style="left:1456.0px;top:74.9px;width:47.0px;height:1.3px;background:rgba(38,95,130,0.5);"></div>
<div class="abs" style="left:1505.0px;top:43.0px;width:0.8px;height:315.0px;background:#323232;"></div>
<div class="abs" style="left:1507.0px;top:60.5px;width:5.0px;height:7.0px;background:#bdbdbd;"></div>
<div class="abs" style="left:1507.0px;top:176.0px;width:5.0px;height:5.0px;background:#a0a0a0;"></div>
<div class="redbox" style="left:1139.6px;top:84.4px;width:186.8px;height:91.8px"></div>
<div class="redbox" style="left:1188.5px;top:181.9px;width:33.5px;height:23.3px"></div>
<div class="abs" style="left:146.0px;top:357.5px;width:1366.0px;height:1.0px;background:#414141;"></div>
<div id="f24" class="t cjn" style="left:160.5px;top:363.9px;color:#969696;">问题</div>
<div id="f25" class="t cjb" style="left:193.2px;top:363.9px;color:#e7e7e7;">输出</div>
<div class="abs" style="left:193.2px;top:382.7px;width:16.8px;height:1.0px;background:#e7e7e7;"></div>
<div id="f26" class="t cjn" style="left:225.8px;top:363.9px;color:#969696;">调试控制台</div>
<div id="f27" class="t cjn" style="left:282.7px;top:363.9px;color:#969696;">终端</div>
<div class="abs" style="left:1247.7px;top:363.0px;width:131.2px;height:18.8px;background:#3c3c3c;"></div>
<div id="f28" class="t " style="left:1254.8px;top:364.7px;color:#f0f0f0;">Code</div>
<svg style="left:1362.6px;top:368.0px" width="12" height="8" viewBox="0 0 12 8"><path d="M2.2 2 L6 5.8 L9.8 2" fill="none" stroke="#d0d0d0" stroke-width="1"/></svg>
<svg style="left:1391.0px;top:367.5px" width="12" height="10" viewBox="0 0 12 10"><path d="M0 1 h11.4 M0 3.6 h11.4 M0 6.2 h6.4 M0 8.8 h6.4 M8 6.2 l3.2 3.2 M11.2 6.2 l-3.2 3.2" fill="none" stroke="#c5c5c5" stroke-width="1"/></svg>
<svg style="left:1416.5px;top:367.0px" width="11" height="12" viewBox="0 0 11 12"><rect x="0.9" y="5.2" width="8.6" height="5.6" rx="0.6" fill="none" stroke="#c5c5c5" stroke-width="1.1"/><path d="M2.8 5.2 V3.2 A2.4 2.4 0 0 1 7.4 2.3" fill="none" stroke="#c5c5c5" stroke-width="1.1"/></svg>
<svg style="left:1440.5px;top:367.0px" width="13" height="12" viewBox="0 0 13 12"><path d="M3.4 2.6 h5.2 l2.6 2.6 v5.6 h-7.8 z M3.4 4.8 h-2.2 v-2 l1.4 -1.6 h4 l1 1.4" fill="none" stroke="#6a6a6a" stroke-width="1"/></svg>
<svg style="left:1465.5px;top:368.0px" width="12" height="10" viewBox="0 0 12 10"><path d="M1.6 6.8 L5.6 2.8 L9.6 6.8" fill="none" stroke="#c5c5c5" stroke-width="1.1"/></svg>
<svg style="left:1490.6px;top:368.2px" width="10" height="10" viewBox="0 0 10 10"><path d="M1.5 1.5 L8.5 8.5 M8.5 1.5 L1.5 8.5" fill="none" stroke="#c5c5c5" stroke-width="1.1"/></svg>
<div class="abs" style="left:161.6px;top:487.4px;width:0.8px;height:73.2px;background:#323232;"></div>
<div class="ol" style="top:385.30px"><span class="ob">[Running]</span><span class="oo"> node "d:\mongoose\studentsSave.js"</span></div>
<div class="ol" style="top:399.93px">(node:2904) DeprecationWarning: current URL string parser is deprecated, and will be removed in a future version. To use the new parser, pass option { useNewUrlParser: true } to MongoClient.connect.</div>
<div class="ol" style="top:414.56px">(Use `node --trace-deprecation ...` to show where the warning was created)</div>
<div class="ol" style="top:429.19px">(node:2904) DeprecationWarning: current Server Discovery and Monitoring engine is deprecated, and will be removed in a future version. To use the new Server Discover and Monitoring engine, pass option { useUnifiedTopology:</div>
<div class="ol" style="top:443.82px">true } to the MongoClient constructor.</div>
<div class="ol" style="top:458.45px"><span class="cj">连接成功</span></div>
<div class="ol" style="top:473.08px">{</div>
<div class="ol" style="top:487.71px">  _id: 5fd71cb1e95f500b58e26bd9,</div>
<div class="ol" style="top:502.34px">  name: '<span class="cj">小黑</span>',</div>
<div class="ol" style="top:516.97px">  age: 18,</div>
<div class="ol" style="top:531.60px">  sex: '<span class="cj">男</span>',</div>
<div class="ol" style="top:546.23px">  __v: 0</div>
<div class="ol" style="top:560.86px">}</div>
<div class="abs" style="left:1505.0px;top:385.0px;width:0.8px;height:198.0px;background:#333333;"></div>
<div class="abs" id="wm" style="left:1332.4px;top:542px;height:24px;line-height:24px;font-size:17.9px;color:rgba(255,255,255,0.42);text-shadow:0.6px 0.6px 1px rgba(0,0,0,0.6)"><span style="font-size:16.2px">@</span>稀土掘金技术社区</div>
</div>
</body>
</html>
